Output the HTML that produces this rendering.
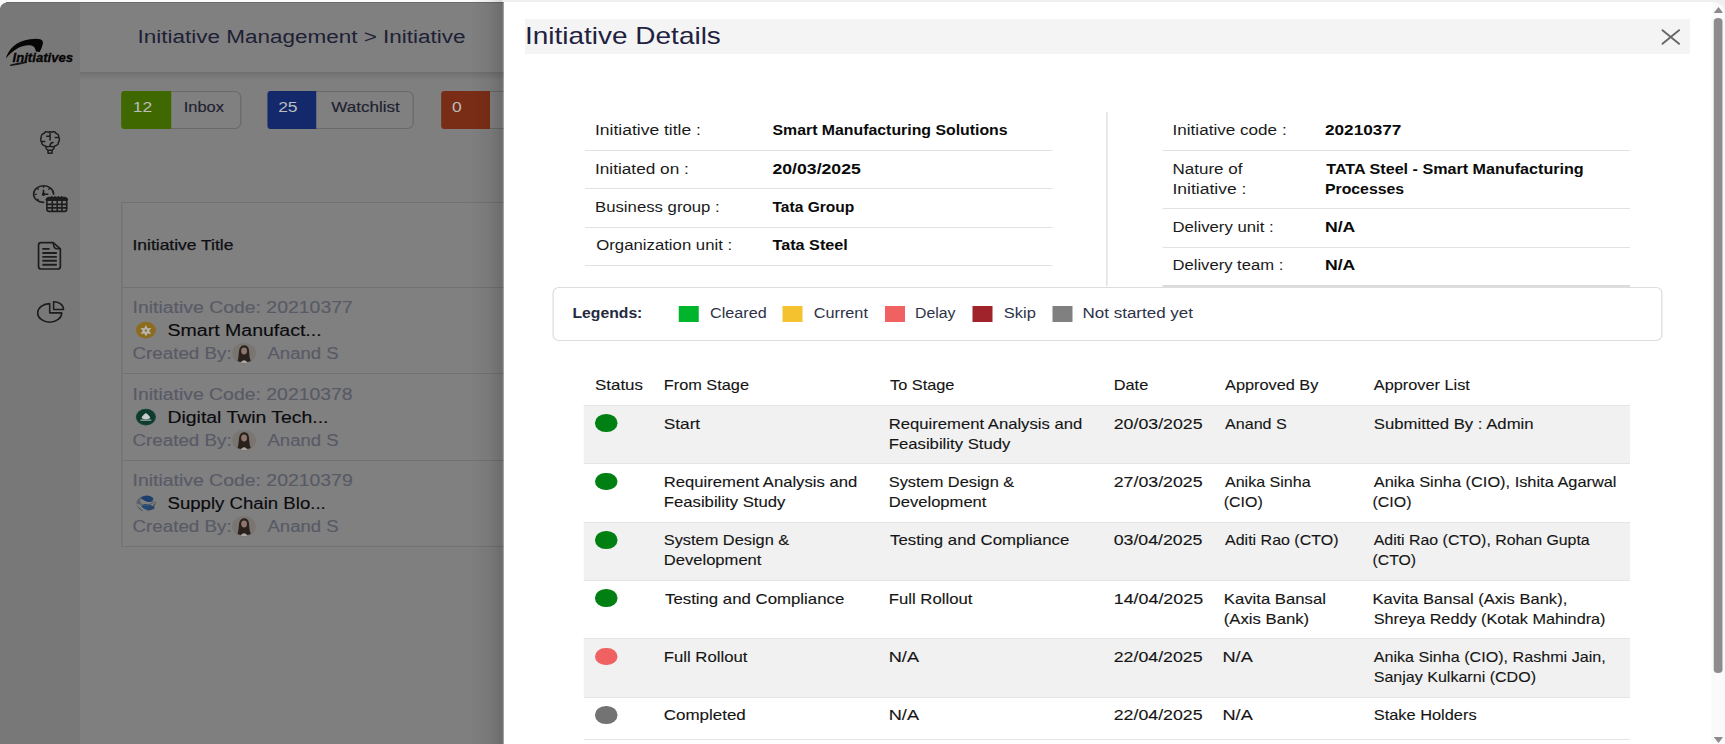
<!DOCTYPE html>
<html><head><meta charset="utf-8">
<style>
*{box-sizing:border-box;margin:0;padding:0}
html,body{width:1725px;height:744px;overflow:hidden;background:#f8f8f8;font-family:"Liberation Sans",sans-serif}
#w{position:absolute;left:0;top:0;width:1380px;height:744px;transform:scaleX(1.25);transform-origin:0 0}
.a{position:absolute;white-space:nowrap}
</style></head><body>
<div id="w">
<div class="a" style="left:0.0px;top:0px;width:416.00px;height:2.00px;background:#fbfbfb;"></div>
<div class="a" style="left:0.0px;top:2px;width:416.00px;height:742.00px;background:#7f7f7f;border-top-left-radius:8px 7px;"></div>
<div class="a" style="left:0.0px;top:2px;width:64.40px;height:742.00px;background:#787878;border-top-left-radius:8px 7px;"></div>
<div class="a" style="left:64.4px;top:3px;width:351.60px;height:69.30px;background:#808080;"></div>
<div class="a" style="left:64.4px;top:72.3px;width:351.60px;height:7.70px;background:linear-gradient(to bottom,rgba(0,0,0,.13),rgba(0,0,0,0));"></div>
<div class="a" style="left:4.8px;top:2px;width:411.20px;height:1.20px;background:#6b6b6b;"></div>
<svg class="a" style="left:0.0px;top:32px;width:40.00px;height:38px" viewBox="0 32 50 38" preserveAspectRatio="none" ><path d="M5.9 58.6 C8 50 16 41 30 39.3 C36 38.3 41 38.4 42.6 41 C43.6 43 42.2 47 39.8 51.9 L35.8 51.4 C35.6 48 34 45.8 30 45.2 C22 44.5 12 50 5.9 58.6 Z" fill="#060606"/><path d="M10 65.4 C15 63.6 21 62.6 27 62.3 C21 63.9 15 65.1 10 65.4 Z" fill="#111" stroke="#111" stroke-width="0.9"/></svg>
<div class="a" style="left:9.66px;top:50.80px;font-size:13px;line-height:13px;color:#060606;font-weight:bold;letter-spacing:0px;transform:scaleX(0.8095);transform-origin:0 0;font-style:italic;-webkit-text-stroke:0.3px #060606;">Initiatives</div>
<svg class="a" style="left:27.2px;top:126px;width:25.60px;height:32px" viewBox="34 126 32 32" preserveAspectRatio="none" fill="none" stroke="#1d1d1d" stroke-linecap="round" stroke-linejoin="round"><g transform="translate(34 126)" stroke-width="1.5"><path d="M11.5 20 C9 19.5 7.6 18 8 16.3 C6.6 15 6.6 12.8 7.6 11.6 C7 9.6 8.4 7.6 10.3 7.4 C11 5.8 13.3 5.2 14.6 6.2 C15.6 5.6 17 5.6 18 6.2 C19.3 5.2 21.6 5.8 22.3 7.4 C24.2 7.6 25.6 9.6 25 11.6 C26 12.8 26 15 24.6 16.3 C25 18 23.6 19.5 21 20 C20 21 17.5 21.2 16.3 20.2 C15 21.2 12.5 21 11.5 20 Z"/><path d="M16.3 7 V14 M13 10.3 H16.3 M21.5 11.6 H24.6 M8 15.6 H11 M16.3 20 C16.3 18 17.3 16.6 19.3 16.5"/><path d="M12 20.5 C12 22.5 12.6 23.6 14.2 24.3 H18.4 C20 23.6 20.6 22.5 20.6 20.5"/><path d="M14.3 24.5 V27.3 H18.3 V24.5"/></g></svg>
<svg class="a" style="left:24.0px;top:182px;width:32.00px;height:34px" viewBox="30 182 40 34" preserveAspectRatio="none" fill="none" stroke="#1d1d1d" stroke-linecap="round" stroke-linejoin="round"><g transform="translate(30 182)" stroke-width="1.6"><path d="M23.6 12.3 A10 8.3 0 1 0 13.6 20.4"/><path d="M13.5 8.2 V12.3 H17.8"/><circle cx="13.5" cy="12.3" r="0.9"/><path d="M13.5 4.3 V5.3 M5.2 12.3 H6.3 M7.6 6.7 L8.3 7.3 M7.6 17.9 L8.3 17.3 M19.4 6.7 L18.7 7.3" stroke-width="1.2"/><rect x="16.9" y="15.6" width="19.8" height="13.8" rx="2.2"/><path d="M17 17.6 H36.6" stroke-width="3"/><path d="M17 22.4 H36.6 M17 25.9 H36.6 M22.3 19 V29.3 M27.2 19 V29.3 M31.9 19 V29.3"/><path d="M21.7 14.6 V16 M24.9 14.6 V16 M28.3 14.6 V16 M31.5 14.6 V16" stroke-width="1.4"/></g></svg>
<svg class="a" style="left:27.2px;top:238px;width:25.60px;height:36px" viewBox="34 238 32 36" preserveAspectRatio="none" fill="none" stroke="#1d1d1d" stroke-linecap="round" stroke-linejoin="round"><g transform="translate(34 238)"><path d="M7.3 4.6 H19.4 L26.6 10.9 V28.4 C26.6 30.2 25.6 31 24 31 H7.3 C5.6 31 4.8 30.2 4.8 28.4 V7.2 C4.8 5.5 5.6 4.6 7.3 4.6 Z" stroke-width="1.7"/><path d="M19.6 4.8 C19.6 8.8 20.5 10.8 23.5 10.8 H26.5" stroke-width="1.6"/><path d="M8.6 10.9 H15.9 M8.6 15 H23.1 M8.6 18.9 H23.1 M8.6 22.7 H23.1 M8.6 26.8 H23.1" stroke-width="1.9" stroke-linecap="butt"/></g></svg>
<svg class="a" style="left:25.6px;top:296px;width:28.80px;height:32px" viewBox="32 296 36 32" preserveAspectRatio="none" fill="none" stroke="#1d1d1d" stroke-linecap="round" stroke-linejoin="round"><g transform="translate(32 296)" stroke-width="1.6"><path d="M17.2 7.6 A12 9.3 0 1 0 29.2 16.9 L17.2 16.9 Z"/><path d="M21.1 5.7 A9.9 7.8 0 0 1 31 13.5 L21.1 13.5 Z"/></g></svg>
<div class="a" style="left:109.70px;top:27.96px;font-size:18px;line-height:18px;color:#1e2036;font-weight:normal;letter-spacing:0px;transform:scaleX(0.9993);transform-origin:0 0;">Initiative Management &gt; Initiative</div>
<div class="a" style="left:97.2px;top:90.6px;width:95.44px;height:38.30px;border:1px solid #6a6a6a;border-radius:4px 5px 5px 4px/5px 6px 6px 5px;background:#808080;overflow:hidden;"></div>
<div class="a" style="left:97.2px;top:90.6px;width:39.60px;height:38.30px;background:#3f6900;border-radius:2.4px 0 0 2.4px/3px 0 0 3px;"></div>
<div class="a" style="left:106.13px;top:99.85px;font-size:14px;line-height:14px;color:#bcbcbc;font-weight:normal;letter-spacing:0px;">12</div>
<div class="a" style="left:147.19px;top:99.85px;font-size:14px;line-height:14px;color:#1f2131;font-weight:normal;letter-spacing:0px;transform:scaleX(0.9388);transform-origin:0 0;-webkit-text-stroke:0.15px #1f2131;">Inbox</div>
<div class="a" style="left:214.0px;top:90.6px;width:117.36px;height:38.30px;border:1px solid #6a6a6a;border-radius:4px 5px 5px 4px/5px 6px 6px 5px;background:#808080;overflow:hidden;"></div>
<div class="a" style="left:214.0px;top:90.6px;width:39.20px;height:38.30px;background:#13296c;border-radius:2.4px 0 0 2.4px/3px 0 0 3px;"></div>
<div class="a" style="left:222.50px;top:99.85px;font-size:14px;line-height:14px;color:#bcbcbc;font-weight:normal;letter-spacing:0px;">25</div>
<div class="a" style="left:264.50px;top:99.85px;font-size:14px;line-height:14px;color:#1f2131;font-weight:normal;letter-spacing:0px;transform:scaleX(0.9739);transform-origin:0 0;-webkit-text-stroke:0.15px #1f2131;">Watchlist</div>
<div class="a" style="left:352.8px;top:90.6px;width:95.20px;height:38.30px;border:1px solid #6a6a6a;border-radius:4px 5px 5px 4px/5px 6px 6px 5px;background:#808080;overflow:hidden;"></div>
<div class="a" style="left:352.8px;top:90.6px;width:39.20px;height:38.30px;background:#7a2d16;border-radius:2.4px 0 0 2.4px/3px 0 0 3px;"></div>
<div class="a" style="left:361.61px;top:99.85px;font-size:14px;line-height:14px;color:#bcbcbc;font-weight:normal;letter-spacing:0px;">0</div>
<div class="a" style="left:96.8px;top:202px;width:351.20px;height:345.00px;background:#808080;"></div>
<div class="a" style="left:96.8px;top:202px;width:351.20px;height:1.00px;background:#717276;"></div>
<div class="a" style="left:96.8px;top:202px;width:0.80px;height:345.00px;background:#717276;"></div>
<div class="a" style="left:105.67px;top:237.73px;font-size:14.5px;line-height:14.5px;color:#0e0e12;font-weight:normal;letter-spacing:0px;transform:scaleX(0.9629);transform-origin:0 0;-webkit-text-stroke:0.25px #0e0e12;">Initiative Title</div>
<div class="a" style="left:97.6px;top:286.9px;width:350.40px;height:1.00px;background:#717276;"></div>
<div class="a" style="left:105.77px;top:300.49px;font-size:15.6px;line-height:15.6px;color:#585a66;font-weight:normal;letter-spacing:0px;transform:scaleX(0.9964);transform-origin:0 0;-webkit-text-stroke:0.15px #585a66;">Initiative Code: 20210377</div>
<svg class="a" style="left:105.6px;top:317.4px;width:22.40px;height:26.0px" viewBox="132 317.4 28 26.0" preserveAspectRatio="none" ><ellipse cx="145.4" cy="330.5" rx="10.1" ry="8.4" fill="#8c6c1e"/><path d="M145.4 325.2 L147 328.6 L150.8 328.3 L148.6 331.2 L150.6 334.4 L147 333.9 L145.4 337 L143.8 333.9 L140.2 334.4 L142.2 331.2 L140 328.3 L143.8 328.6 Z" fill="#b9b6b0"/><circle cx="145.4" cy="331" r="1.3" fill="#8c7a4a"/></svg>
<div class="a" style="left:134.25px;top:323.49px;font-size:15.6px;line-height:15.6px;color:#0b0b0e;font-weight:normal;letter-spacing:0px;transform:scaleX(1.0018);transform-origin:0 0;-webkit-text-stroke:0.15px #0b0b0e;">Smart Manufact...</div>
<div class="a" style="left:106.44px;top:346.29px;font-size:15.6px;line-height:15.6px;color:#585a66;font-weight:normal;letter-spacing:0px;transform:scaleX(0.9631);transform-origin:0 0;-webkit-text-stroke:0.15px #585a66;">Created By:</div>
<svg class="a" style="left:184.0px;top:341.4px;width:22.40px;height:24.0px" viewBox="230 341.4 28 24.0" preserveAspectRatio="none" ><g transform="translate(0 0.00)"><ellipse cx="244.1" cy="353.6" rx="11.9" ry="10.2" fill="#7a7571"/><path d="M237.6 361.5 C238.8 358 238.6 354 239.2 350.5 C239.8 347 241.8 345.6 244.2 345.6 C246.8 345.6 248.6 347.2 249 350.5 C249.4 354 249.2 358 250.8 361.5 C248 363 240.5 363 237.6 361.5 Z" fill="#2a211c"/><ellipse cx="244.1" cy="351.4" rx="2.9" ry="3.4" fill="#8e766c"/><path d="M241 363.4 C241.6 359.6 246.6 359.6 247.2 363.4 Z" fill="#aba6a2"/></g></svg>
<div class="a" style="left:213.97px;top:346.29px;font-size:15.6px;line-height:15.6px;color:#585a66;font-weight:normal;letter-spacing:0px;transform:scaleX(0.9502);transform-origin:0 0;-webkit-text-stroke:0.15px #585a66;">Anand S</div>
<div class="a" style="left:97.6px;top:373.2px;width:350.40px;height:1.00px;background:#717276;"></div>
<div class="a" style="left:105.77px;top:386.79px;font-size:15.6px;line-height:15.6px;color:#585a66;font-weight:normal;letter-spacing:0px;transform:scaleX(0.9958);transform-origin:0 0;-webkit-text-stroke:0.15px #585a66;">Initiative Code: 20210378</div>
<svg class="a" style="left:105.6px;top:403.7px;width:22.40px;height:26.0px" viewBox="132 403.7 28 26.0" preserveAspectRatio="none" ><ellipse cx="145.4" cy="416.8" rx="10.1" ry="8.4" fill="#17473a"/><ellipse cx="145.4" cy="416.8" rx="9" ry="7.4" fill="#0f3a2e"/><path d="M141 417.5 C142 414.8 143.6 414 145.4 412.6 C147.2 414 148.8 414.8 149.8 417.5 C148 419 146.5 419.2 145.4 418.6 C144.3 419.2 142.8 419 141 417.5 Z" fill="#c9cfcc"/><path d="M140 419.8 H150.8" stroke="#c9cfcc" stroke-width="1"/></svg>
<div class="a" style="left:133.69px;top:409.79px;font-size:15.6px;line-height:15.6px;color:#0b0b0e;font-weight:normal;letter-spacing:0px;transform:scaleX(0.9951);transform-origin:0 0;-webkit-text-stroke:0.15px #0b0b0e;">Digital Twin Tech...</div>
<div class="a" style="left:106.44px;top:432.59px;font-size:15.6px;line-height:15.6px;color:#585a66;font-weight:normal;letter-spacing:0px;transform:scaleX(0.9631);transform-origin:0 0;-webkit-text-stroke:0.15px #585a66;">Created By:</div>
<svg class="a" style="left:184.0px;top:427.7px;width:22.40px;height:24.0px" viewBox="230 427.7 28 24.0" preserveAspectRatio="none" ><g transform="translate(0 86.30)"><ellipse cx="244.1" cy="353.6" rx="11.9" ry="10.2" fill="#7a7571"/><path d="M237.6 361.5 C238.8 358 238.6 354 239.2 350.5 C239.8 347 241.8 345.6 244.2 345.6 C246.8 345.6 248.6 347.2 249 350.5 C249.4 354 249.2 358 250.8 361.5 C248 363 240.5 363 237.6 361.5 Z" fill="#2a211c"/><ellipse cx="244.1" cy="351.4" rx="2.9" ry="3.4" fill="#8e766c"/><path d="M241 363.4 C241.6 359.6 246.6 359.6 247.2 363.4 Z" fill="#aba6a2"/></g></svg>
<div class="a" style="left:213.97px;top:432.59px;font-size:15.6px;line-height:15.6px;color:#585a66;font-weight:normal;letter-spacing:0px;transform:scaleX(0.9502);transform-origin:0 0;-webkit-text-stroke:0.15px #585a66;">Anand S</div>
<div class="a" style="left:97.6px;top:459.5px;width:350.40px;height:1.00px;background:#717276;"></div>
<div class="a" style="left:105.77px;top:473.09px;font-size:15.6px;line-height:15.6px;color:#585a66;font-weight:normal;letter-spacing:0px;transform:scaleX(0.9961);transform-origin:0 0;-webkit-text-stroke:0.15px #585a66;">Initiative Code: 20210379</div>
<svg class="a" style="left:105.6px;top:490.0px;width:22.40px;height:26.0px" viewBox="132 490.0 28 26.0" preserveAspectRatio="none" ><path d="M139.5 498 C143 494.5 150 494.5 152.6 498 C153.5 501 150 503.2 146 501.5 C143.5 500.5 141.5 499 139.5 498 Z" fill="#1d3f6e"/><path d="M140.5 506 C143 503.4 147 503.5 150.3 505 C152.5 506 154 507 154.5 507.8 C152 511 145 511.5 140.5 506 Z" fill="#1f4a78"/><path d="M135.8 503.5 C136.5 499 139 497.5 141.2 497.2 C139 500 139.5 503 142.5 504.5 C146 506 151 503 154.5 500.5 C153.5 504 149 505.8 145 505.6 C141 505.4 138 504.5 135.8 503.5 Z" fill="#5d6268"/><path d="M155.5 501.2 C155 506 151 510 146 511 C151 508 153.5 505 155.5 501.2 Z M135.8 504 C137 508 140 510.5 143 511 C139.5 508.8 137 506.8 135.8 504 Z" fill="#3a3e44"/></svg>
<div class="a" style="left:134.28px;top:496.09px;font-size:15.6px;line-height:15.6px;color:#0b0b0e;font-weight:normal;letter-spacing:0px;transform:scaleX(0.9548);transform-origin:0 0;-webkit-text-stroke:0.15px #0b0b0e;">Supply Chain Blo...</div>
<div class="a" style="left:106.44px;top:518.89px;font-size:15.6px;line-height:15.6px;color:#585a66;font-weight:normal;letter-spacing:0px;transform:scaleX(0.9631);transform-origin:0 0;-webkit-text-stroke:0.15px #585a66;">Created By:</div>
<svg class="a" style="left:184.0px;top:514.0px;width:22.40px;height:24.0px" viewBox="230 514.0 28 24.0" preserveAspectRatio="none" ><g transform="translate(0 172.60)"><ellipse cx="244.1" cy="353.6" rx="11.9" ry="10.2" fill="#7a7571"/><path d="M237.6 361.5 C238.8 358 238.6 354 239.2 350.5 C239.8 347 241.8 345.6 244.2 345.6 C246.8 345.6 248.6 347.2 249 350.5 C249.4 354 249.2 358 250.8 361.5 C248 363 240.5 363 237.6 361.5 Z" fill="#2a211c"/><ellipse cx="244.1" cy="351.4" rx="2.9" ry="3.4" fill="#8e766c"/><path d="M241 363.4 C241.6 359.6 246.6 359.6 247.2 363.4 Z" fill="#aba6a2"/></g></svg>
<div class="a" style="left:213.97px;top:518.89px;font-size:15.6px;line-height:15.6px;color:#585a66;font-weight:normal;letter-spacing:0px;transform:scaleX(0.9502);transform-origin:0 0;-webkit-text-stroke:0.15px #585a66;">Anand S</div>
<div class="a" style="left:97.6px;top:546px;width:350.40px;height:1.00px;background:#717276;"></div>
<div class="a" style="left:376.0px;top:0px;width:26.40px;height:744.00px;background:linear-gradient(to right,rgba(0,0,0,0),rgba(0,0,0,.06) 60%,rgba(0,0,0,.16));"></div>
<div class="a" style="left:402.72px;top:0px;width:977.28px;height:744.00px;background:#ffffff;"></div>
<div class="a" style="left:402.4px;top:0px;width:977.60px;height:2.00px;background:#efefef;"></div>
<div class="a" style="left:420.0px;top:19.3px;width:931.60px;height:35.10px;background:#f4f4f4;"></div>
<div class="a" style="left:419.69px;top:24.15px;font-size:23.8px;line-height:23.8px;color:#1f2140;font-weight:normal;letter-spacing:0px;transform:scaleX(0.9402);transform-origin:0 0;">Initiative Details</div>
<svg class="a" style="left:1329.2px;top:29px;width:15.20px;height:16px" viewBox="0 0 19 16" preserveAspectRatio="none"><path d="M1.2 1.2 L17.8 14.8 M17.8 1.2 L1.2 14.8" stroke="#676767" stroke-width="1.9" stroke-linecap="round"/></svg>
<div class="a" style="left:1369.2px;top:2px;width:10.80px;height:742.00px;background:#fafafa;"></div>
<div class="a" style="left:1364.8px;top:0px;width:15.20px;height:16.00px;background:#efefef;"></div>
<div class="a" style="left:1364.8px;top:1.6px;width:15.60px;height:14.40px;background:linear-gradient(to right,#fff 0,#fff 5.5px,#fafafa 5.5px);border-top-right-radius:11px 10px;"></div>
<div class="a" style="left:1364.8px;top:1.6px;width:4.40px;height:14.40px;background:#fff;"></div>
<svg class="a" style="left:1370.8px;top:7px;width:7.60px;height:6px" viewBox="0 0 10 6" preserveAspectRatio="none"><path d="M0 6 L5 0 L10 6 Z" fill="#8a8a8a"/></svg>
<svg class="a" style="left:1370.8px;top:737px;width:7.60px;height:6px" viewBox="0 0 10 6" preserveAspectRatio="none"><path d="M0 0 L5 6 L10 0 Z" fill="#8a8a8a"/></svg>
<div class="a" style="left:1371.44px;top:18.4px;width:6.40px;height:654.60px;background:#8c8c8c;border-radius:4px/4px;"></div>
<div class="a" style="left:475.91px;top:123.35px;font-size:14px;line-height:14px;color:#1a1a1a;font-weight:normal;letter-spacing:0px;transform:scaleX(0.9990);transform-origin:0 0;">Initiative title :</div>
<div class="a" style="left:618.03px;top:123.35px;font-size:14px;line-height:14px;color:#0a0a0a;font-weight:bold;letter-spacing:0px;transform:scaleX(0.9056);transform-origin:0 0;">Smart Manufacturing Solutions</div>
<div class="a" style="left:475.93px;top:161.65px;font-size:14px;line-height:14px;color:#1a1a1a;font-weight:normal;letter-spacing:0px;transform:scaleX(0.9834);transform-origin:0 0;">Initiated on :</div>
<div class="a" style="left:617.91px;top:161.65px;font-size:14px;line-height:14px;color:#0a0a0a;font-weight:bold;letter-spacing:0px;transform:scaleX(1.0082);transform-origin:0 0;">20/03/2025</div>
<div class="a" style="left:476.10px;top:199.95px;font-size:14px;line-height:14px;color:#1a1a1a;font-weight:normal;letter-spacing:0px;transform:scaleX(0.9566);transform-origin:0 0;">Business group :</div>
<div class="a" style="left:618.26px;top:199.95px;font-size:14px;line-height:14px;color:#0a0a0a;font-weight:bold;letter-spacing:0px;transform:scaleX(0.8889);transform-origin:0 0;">Tata Group</div>
<div class="a" style="left:476.57px;top:238.25px;font-size:14px;line-height:14px;color:#1a1a1a;font-weight:normal;letter-spacing:0px;transform:scaleX(0.9570);transform-origin:0 0;">Organization unit :</div>
<div class="a" style="left:618.25px;top:238.25px;font-size:14px;line-height:14px;color:#0a0a0a;font-weight:bold;letter-spacing:0px;transform:scaleX(0.9257);transform-origin:0 0;">Tata Steel</div>
<div class="a" style="left:467.6px;top:150px;width:374.80px;height:1.00px;background:#e2e2e2;"></div>
<div class="a" style="left:467.6px;top:188px;width:374.80px;height:1.00px;background:#e2e2e2;"></div>
<div class="a" style="left:467.6px;top:227px;width:374.80px;height:1.00px;background:#e2e2e2;"></div>
<div class="a" style="left:467.6px;top:265px;width:374.80px;height:1.00px;background:#e2e2e2;"></div>
<div class="a" style="left:885.36px;top:112.4px;width:1.04px;height:173.60px;background:#dcdcdc;"></div>
<div class="a" style="left:937.78px;top:123.35px;font-size:14px;line-height:14px;color:#1a1a1a;font-weight:normal;letter-spacing:0px;transform:scaleX(0.9778);transform-origin:0 0;">Initiative code :</div>
<div class="a" style="left:1060.32px;top:123.35px;font-size:14px;line-height:14px;color:#0a0a0a;font-weight:bold;letter-spacing:0px;transform:scaleX(0.9805);transform-origin:0 0;">20210377</div>
<div class="a" style="left:937.92px;top:162.25px;font-size:14px;line-height:14px;color:#1a1a1a;font-weight:normal;letter-spacing:0px;transform:scaleX(0.9720);transform-origin:0 0;">Nature of</div>
<div class="a" style="left:937.75px;top:181.95px;font-size:14px;line-height:14px;color:#1a1a1a;font-weight:normal;letter-spacing:0px;transform:scaleX(0.9985);transform-origin:0 0;">Initiative :</div>
<div class="a" style="left:1060.66px;top:162.25px;font-size:14px;line-height:14px;color:#0a0a0a;font-weight:bold;letter-spacing:0px;transform:scaleX(0.9216);transform-origin:0 0;">TATA Steel - Smart Manufacturing</div>
<div class="a" style="left:1059.96px;top:181.95px;font-size:14px;line-height:14px;color:#0a0a0a;font-weight:bold;letter-spacing:0px;transform:scaleX(0.9022);transform-origin:0 0;">Processes</div>
<div class="a" style="left:937.94px;top:219.85px;font-size:14px;line-height:14px;color:#1a1a1a;font-weight:normal;letter-spacing:0px;transform:scaleX(0.9536);transform-origin:0 0;">Delivery unit :</div>
<div class="a" style="left:1059.86px;top:219.85px;font-size:14px;line-height:14px;color:#0a0a0a;font-weight:bold;letter-spacing:0px;transform:scaleX(1.0068);transform-origin:0 0;">N/A</div>
<div class="a" style="left:937.95px;top:258.35px;font-size:14px;line-height:14px;color:#1a1a1a;font-weight:normal;letter-spacing:0px;transform:scaleX(0.9493);transform-origin:0 0;">Delivery team :</div>
<div class="a" style="left:1059.86px;top:258.35px;font-size:14px;line-height:14px;color:#0a0a0a;font-weight:bold;letter-spacing:0px;transform:scaleX(1.0068);transform-origin:0 0;">N/A</div>
<div class="a" style="left:929.92px;top:150px;width:374.08px;height:1.00px;background:#e2e2e2;"></div>
<div class="a" style="left:929.92px;top:208px;width:374.08px;height:1.00px;background:#e2e2e2;"></div>
<div class="a" style="left:929.92px;top:247px;width:374.08px;height:1.00px;background:#e2e2e2;"></div>
<div class="a" style="left:929.92px;top:285px;width:374.08px;height:1.50px;background:#dcdcdc;"></div>
<div class="a" style="left:441.84px;top:286.5px;width:888.16px;height:54.30px;border:1.4px solid #dddddd;border-radius:5px/6px;background:transparent;"></div>
<div class="a" style="left:458.28px;top:305.95px;font-size:14px;line-height:14px;color:#252a40;font-weight:bold;letter-spacing:0px;transform:scaleX(0.8981);transform-origin:0 0;">Legends:</div>
<div class="a" style="left:542.64px;top:306px;width:16.40px;height:16.00px;background:#00b52b;"></div>
<div class="a" style="left:567.66px;top:305.95px;font-size:14px;line-height:14px;color:#2d3248;font-weight:normal;letter-spacing:0px;transform:scaleX(0.9246);transform-origin:0 0;">Cleared</div>
<div class="a" style="left:626.08px;top:306px;width:16.40px;height:16.00px;background:#f4c12f;"></div>
<div class="a" style="left:650.78px;top:305.95px;font-size:14px;line-height:14px;color:#2d3248;font-weight:normal;letter-spacing:0px;transform:scaleX(0.9278);transform-origin:0 0;">Current</div>
<div class="a" style="left:707.76px;top:306px;width:16.40px;height:16.00px;background:#f06161;"></div>
<div class="a" style="left:732.16px;top:305.95px;font-size:14px;line-height:14px;color:#2d3248;font-weight:normal;letter-spacing:0px;transform:scaleX(0.9036);transform-origin:0 0;">Delay</div>
<div class="a" style="left:778.0px;top:306px;width:16.40px;height:16.00px;background:#a0222b;"></div>
<div class="a" style="left:802.92px;top:305.95px;font-size:14px;line-height:14px;color:#2d3248;font-weight:normal;letter-spacing:0px;transform:scaleX(0.9411);transform-origin:0 0;">Skip</div>
<div class="a" style="left:841.6px;top:306px;width:16.40px;height:16.00px;background:#808080;"></div>
<div class="a" style="left:865.84px;top:305.95px;font-size:14px;line-height:14px;color:#2d3248;font-weight:normal;letter-spacing:0px;transform:scaleX(0.9711);transform-origin:0 0;">Not started yet</div>
<div class="a" style="left:476.11px;top:377.40px;font-size:15px;line-height:15px;color:#151515;font-weight:normal;letter-spacing:0px;transform:scaleX(0.9026);transform-origin:0 0;-webkit-text-stroke:0.12px #151515;">Status</div>
<div class="a" style="left:530.85px;top:377.40px;font-size:15px;line-height:15px;color:#151515;font-weight:normal;letter-spacing:0px;transform:scaleX(0.8700);transform-origin:0 0;-webkit-text-stroke:0.12px #151515;">From Stage</div>
<div class="a" style="left:711.71px;top:377.40px;font-size:15px;line-height:15px;color:#151515;font-weight:normal;letter-spacing:0px;transform:scaleX(0.8700);transform-origin:0 0;-webkit-text-stroke:0.12px #151515;">To Stage</div>
<div class="a" style="left:890.69px;top:377.40px;font-size:15px;line-height:15px;color:#151515;font-weight:normal;letter-spacing:0px;transform:scaleX(0.8700);transform-origin:0 0;-webkit-text-stroke:0.12px #151515;">Date</div>
<div class="a" style="left:979.65px;top:377.40px;font-size:15px;line-height:15px;color:#151515;font-weight:normal;letter-spacing:0px;transform:scaleX(0.8700);transform-origin:0 0;-webkit-text-stroke:0.12px #151515;">Approved By</div>
<div class="a" style="left:1099.17px;top:377.40px;font-size:15px;line-height:15px;color:#151515;font-weight:normal;letter-spacing:0px;transform:scaleX(0.8700);transform-origin:0 0;-webkit-text-stroke:0.12px #151515;">Approver List</div>
<div class="a" style="left:467.2px;top:405.2px;width:836.80px;height:58.20px;background:#f1f1f1;"></div>
<div class="a" style="left:467.2px;top:405px;width:836.80px;height:1.00px;background:#e3e5e9;"></div>
<div class="a" style="left:476.16px;top:414.40px;width:17.44px;height:17.6px;border-radius:50%;background:#008013"></div>
<div class="a" style="left:531.29px;top:415.60px;font-size:15px;line-height:15px;color:#151515;font-weight:normal;letter-spacing:0px;transform:scaleX(0.9195);transform-origin:0 0;-webkit-text-stroke:0.12px #151515;">Start</div>
<div class="a" style="left:710.91px;top:415.60px;font-size:15px;line-height:15px;color:#151515;font-weight:normal;letter-spacing:0px;transform:scaleX(0.8880);transform-origin:0 0;-webkit-text-stroke:0.12px #151515;">Requirement Analysis and</div>
<div class="a" style="left:710.90px;top:435.60px;font-size:15px;line-height:15px;color:#151515;font-weight:normal;letter-spacing:0px;transform:scaleX(0.8907);transform-origin:0 0;-webkit-text-stroke:0.12px #151515;">Feasibility Study</div>
<div class="a" style="left:891.05px;top:415.60px;font-size:15px;line-height:15px;color:#151515;font-weight:normal;letter-spacing:0px;transform:scaleX(0.9467);transform-origin:0 0;-webkit-text-stroke:0.12px #151515;">20/03/2025</div>
<div class="a" style="left:979.65px;top:415.60px;font-size:15px;line-height:15px;color:#151515;font-weight:normal;letter-spacing:0px;transform:scaleX(0.8587);transform-origin:0 0;-webkit-text-stroke:0.12px #151515;">Anand S</div>
<div class="a" style="left:1098.59px;top:415.60px;font-size:15px;line-height:15px;color:#151515;font-weight:normal;letter-spacing:0px;transform:scaleX(0.8917);transform-origin:0 0;-webkit-text-stroke:0.12px #151515;">Submitted By : Admin</div>
<div class="a" style="left:467.2px;top:463.4px;width:836.80px;height:58.40px;background:#ffffff;"></div>
<div class="a" style="left:467.2px;top:463px;width:836.80px;height:1.00px;background:#e3e5e9;"></div>
<div class="a" style="left:476.16px;top:472.60px;width:17.44px;height:17.6px;border-radius:50%;background:#008013"></div>
<div class="a" style="left:530.83px;top:473.80px;font-size:15px;line-height:15px;color:#151515;font-weight:normal;letter-spacing:0px;transform:scaleX(0.8880);transform-origin:0 0;-webkit-text-stroke:0.12px #151515;">Requirement Analysis and</div>
<div class="a" style="left:530.82px;top:493.80px;font-size:15px;line-height:15px;color:#151515;font-weight:normal;letter-spacing:0px;transform:scaleX(0.8907);transform-origin:0 0;-webkit-text-stroke:0.12px #151515;">Feasibility Study</div>
<div class="a" style="left:711.41px;top:473.80px;font-size:15px;line-height:15px;color:#151515;font-weight:normal;letter-spacing:0px;transform:scaleX(0.8727);transform-origin:0 0;-webkit-text-stroke:0.12px #151515;">System Design &amp;</div>
<div class="a" style="left:710.91px;top:493.80px;font-size:15px;line-height:15px;color:#151515;font-weight:normal;letter-spacing:0px;transform:scaleX(0.8842);transform-origin:0 0;-webkit-text-stroke:0.12px #151515;">Development</div>
<div class="a" style="left:891.05px;top:473.80px;font-size:15px;line-height:15px;color:#151515;font-weight:normal;letter-spacing:0px;transform:scaleX(0.9467);transform-origin:0 0;-webkit-text-stroke:0.12px #151515;">27/03/2025</div>
<div class="a" style="left:979.65px;top:473.80px;font-size:15px;line-height:15px;color:#151515;font-weight:normal;letter-spacing:0px;transform:scaleX(0.8557);transform-origin:0 0;-webkit-text-stroke:0.12px #151515;">Anika Sinha</div>
<div class="a" style="left:978.89px;top:493.80px;font-size:15px;line-height:15px;color:#151515;font-weight:normal;letter-spacing:0px;transform:scaleX(0.8506);transform-origin:0 0;-webkit-text-stroke:0.12px #151515;">(CIO)</div>
<div class="a" style="left:1099.17px;top:473.80px;font-size:15px;line-height:15px;color:#151515;font-weight:normal;letter-spacing:0px;transform:scaleX(0.8723);transform-origin:0 0;-webkit-text-stroke:0.12px #151515;">Anika Sinha (CIO), Ishita Agarwal</div>
<div class="a" style="left:1098.41px;top:493.80px;font-size:15px;line-height:15px;color:#151515;font-weight:normal;letter-spacing:0px;transform:scaleX(0.8506);transform-origin:0 0;-webkit-text-stroke:0.12px #151515;">(CIO)</div>
<div class="a" style="left:467.2px;top:521.8px;width:836.80px;height:58.40px;background:#f1f1f1;"></div>
<div class="a" style="left:467.2px;top:522px;width:836.80px;height:1.00px;background:#e3e5e9;"></div>
<div class="a" style="left:476.16px;top:531.00px;width:17.44px;height:17.6px;border-radius:50%;background:#008013"></div>
<div class="a" style="left:531.33px;top:532.20px;font-size:15px;line-height:15px;color:#151515;font-weight:normal;letter-spacing:0px;transform:scaleX(0.8727);transform-origin:0 0;-webkit-text-stroke:0.12px #151515;">System Design &amp;</div>
<div class="a" style="left:530.83px;top:552.20px;font-size:15px;line-height:15px;color:#151515;font-weight:normal;letter-spacing:0px;transform:scaleX(0.8842);transform-origin:0 0;-webkit-text-stroke:0.12px #151515;">Development</div>
<div class="a" style="left:711.70px;top:532.20px;font-size:15px;line-height:15px;color:#151515;font-weight:normal;letter-spacing:0px;transform:scaleX(0.8956);transform-origin:0 0;-webkit-text-stroke:0.12px #151515;">Testing and Compliance</div>
<div class="a" style="left:891.21px;top:532.20px;font-size:15px;line-height:15px;color:#151515;font-weight:normal;letter-spacing:0px;transform:scaleX(0.9445);transform-origin:0 0;-webkit-text-stroke:0.12px #151515;">03/04/2025</div>
<div class="a" style="left:979.65px;top:532.20px;font-size:15px;line-height:15px;color:#151515;font-weight:normal;letter-spacing:0px;transform:scaleX(0.8534);transform-origin:0 0;-webkit-text-stroke:0.12px #151515;">Aditi Rao (CTO)</div>
<div class="a" style="left:1099.18px;top:532.20px;font-size:15px;line-height:15px;color:#151515;font-weight:normal;letter-spacing:0px;transform:scaleX(0.8469);transform-origin:0 0;-webkit-text-stroke:0.12px #151515;">Aditi Rao (CTO), Rohan Gupta</div>
<div class="a" style="left:1098.42px;top:552.20px;font-size:15px;line-height:15px;color:#151515;font-weight:normal;letter-spacing:0px;transform:scaleX(0.8420);transform-origin:0 0;-webkit-text-stroke:0.12px #151515;">(CTO)</div>
<div class="a" style="left:467.2px;top:580.2px;width:836.80px;height:58.20px;background:#ffffff;"></div>
<div class="a" style="left:467.2px;top:580px;width:836.80px;height:1.00px;background:#e3e5e9;"></div>
<div class="a" style="left:476.16px;top:589.40px;width:17.44px;height:17.6px;border-radius:50%;background:#008013"></div>
<div class="a" style="left:531.62px;top:590.60px;font-size:15px;line-height:15px;color:#151515;font-weight:normal;letter-spacing:0px;transform:scaleX(0.8956);transform-origin:0 0;-webkit-text-stroke:0.12px #151515;">Testing and Compliance</div>
<div class="a" style="left:710.90px;top:590.60px;font-size:15px;line-height:15px;color:#151515;font-weight:normal;letter-spacing:0px;transform:scaleX(0.8924);transform-origin:0 0;-webkit-text-stroke:0.12px #151515;">Full Rollout</div>
<div class="a" style="left:890.67px;top:590.60px;font-size:15px;line-height:15px;color:#151515;font-weight:normal;letter-spacing:0px;transform:scaleX(0.9517);transform-origin:0 0;-webkit-text-stroke:0.12px #151515;">14/04/2025</div>
<div class="a" style="left:978.58px;top:590.60px;font-size:15px;line-height:15px;color:#151515;font-weight:normal;letter-spacing:0px;transform:scaleX(0.8913);transform-origin:0 0;-webkit-text-stroke:0.12px #151515;">Kavita Bansal</div>
<div class="a" style="left:978.85px;top:610.60px;font-size:15px;line-height:15px;color:#151515;font-weight:normal;letter-spacing:0px;transform:scaleX(0.8906);transform-origin:0 0;-webkit-text-stroke:0.12px #151515;">(Axis Bank)</div>
<div class="a" style="left:1098.12px;top:590.60px;font-size:15px;line-height:15px;color:#151515;font-weight:normal;letter-spacing:0px;transform:scaleX(0.8814);transform-origin:0 0;-webkit-text-stroke:0.12px #151515;">Kavita Bansal (Axis Bank),</div>
<div class="a" style="left:1098.61px;top:610.60px;font-size:15px;line-height:15px;color:#151515;font-weight:normal;letter-spacing:0px;transform:scaleX(0.8652);transform-origin:0 0;-webkit-text-stroke:0.12px #151515;">Shreya Reddy (Kotak Mahindra)</div>
<div class="a" style="left:467.2px;top:638.4px;width:836.80px;height:58.50px;background:#f1f1f1;"></div>
<div class="a" style="left:467.2px;top:638px;width:836.80px;height:1.00px;background:#e3e5e9;"></div>
<div class="a" style="left:476.16px;top:647.60px;width:17.44px;height:17.6px;border-radius:50%;background:#f06262"></div>
<div class="a" style="left:530.82px;top:648.80px;font-size:15px;line-height:15px;color:#151515;font-weight:normal;letter-spacing:0px;transform:scaleX(0.8924);transform-origin:0 0;-webkit-text-stroke:0.12px #151515;">Full Rollout</div>
<div class="a" style="left:710.81px;top:648.80px;font-size:15px;line-height:15px;color:#151515;font-weight:normal;letter-spacing:0px;transform:scaleX(0.9669);transform-origin:0 0;-webkit-text-stroke:0.12px #151515;">N/A</div>
<div class="a" style="left:891.05px;top:648.80px;font-size:15px;line-height:15px;color:#151515;font-weight:normal;letter-spacing:0px;transform:scaleX(0.9467);transform-origin:0 0;-webkit-text-stroke:0.12px #151515;">22/04/2025</div>
<div class="a" style="left:978.49px;top:648.80px;font-size:15px;line-height:15px;color:#151515;font-weight:normal;letter-spacing:0px;transform:scaleX(0.9669);transform-origin:0 0;-webkit-text-stroke:0.12px #151515;">N/A</div>
<div class="a" style="left:1099.17px;top:648.80px;font-size:15px;line-height:15px;color:#151515;font-weight:normal;letter-spacing:0px;transform:scaleX(0.8595);transform-origin:0 0;-webkit-text-stroke:0.12px #151515;">Anika Sinha (CIO), Rashmi Jain,</div>
<div class="a" style="left:1098.62px;top:668.80px;font-size:15px;line-height:15px;color:#151515;font-weight:normal;letter-spacing:0px;transform:scaleX(0.8554);transform-origin:0 0;-webkit-text-stroke:0.12px #151515;">Sanjay Kulkarni (CDO)</div>
<div class="a" style="left:467.2px;top:696.9px;width:836.80px;height:42.40px;background:#ffffff;"></div>
<div class="a" style="left:467.2px;top:697px;width:836.80px;height:1.00px;background:#e3e5e9;"></div>
<div class="a" style="left:476.16px;top:706.10px;width:17.44px;height:17.6px;border-radius:50%;background:#737373"></div>
<div class="a" style="left:531.23px;top:707.30px;font-size:15px;line-height:15px;color:#151515;font-weight:normal;letter-spacing:0px;transform:scaleX(0.9049);transform-origin:0 0;-webkit-text-stroke:0.12px #151515;">Completed</div>
<div class="a" style="left:710.81px;top:707.30px;font-size:15px;line-height:15px;color:#151515;font-weight:normal;letter-spacing:0px;transform:scaleX(0.9669);transform-origin:0 0;-webkit-text-stroke:0.12px #151515;">N/A</div>
<div class="a" style="left:891.05px;top:707.30px;font-size:15px;line-height:15px;color:#151515;font-weight:normal;letter-spacing:0px;transform:scaleX(0.9467);transform-origin:0 0;-webkit-text-stroke:0.12px #151515;">22/04/2025</div>
<div class="a" style="left:978.49px;top:707.30px;font-size:15px;line-height:15px;color:#151515;font-weight:normal;letter-spacing:0px;transform:scaleX(0.9669);transform-origin:0 0;-webkit-text-stroke:0.12px #151515;">N/A</div>
<div class="a" style="left:1098.61px;top:707.30px;font-size:15px;line-height:15px;color:#151515;font-weight:normal;letter-spacing:0px;transform:scaleX(0.8732);transform-origin:0 0;-webkit-text-stroke:0.12px #151515;">Stake Holders</div>
<div class="a" style="left:467.2px;top:739px;width:836.80px;height:1.00px;background:#e3e5e9;"></div>
</div>
</body></html>
